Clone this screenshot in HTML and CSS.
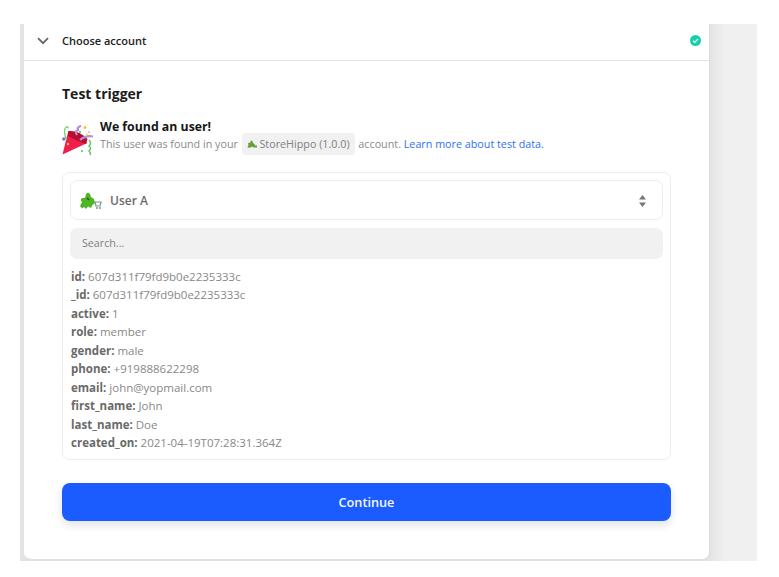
FILE: index.html
```html
<!DOCTYPE html>
<html lang="en">
<head>
    <meta charset="UTF-8">
    <title>Test trigger</title>
    <link rel="stylesheet" href="styles.css">
</head>
<body>
    <div class="frame">
        <div class="card">
            <div class="step-header">
                <svg class="chevron" width="12" height="8" viewBox="0 0 12 8"><path d="M1 1.2 L6 6.2 L11 1.2" fill="none" stroke="#666" stroke-width="1.8"/></svg>
                <span class="step-title">Choose account</span>
                <svg class="check" width="11" height="11" viewBox="0 0 11 11"><circle cx="5.5" cy="5.5" r="5.5" fill="#13d0ab"/><path d="M3 5.7 L4.8 7.4 L8 3.9" fill="none" stroke="#fff" stroke-width="1.2"/></svg>
            </div>

            <div class="step-body">
                <h2>Test trigger</h2>

                <div class="found">
                    <svg class="party" width="32" height="30" viewBox="0 0 32 30">
                        <path d="M0.5 29.5 L6.3 6 Q16 7 25.3 18 Z" fill="#ee1f4c"/>
                        <path d="M6.5 6 Q17 5 25.5 14 L24 19 Q13 15 6 11 Z" fill="#b80f30"/>
                        <path d="M4.5 15 Q1.5 7 3 3.5 Q5 0 6.5 3.5" fill="none" stroke="#7fcf7a" stroke-width="1.4"/>
                        <path d="M15 10 Q12.5 6 16 5 Q15 2 19 1" fill="none" stroke="#b28de0" stroke-width="2.2"/>
                        <path d="M18 15 Q24 10 31 11.5" fill="none" stroke="#b28de0" stroke-width="2.2"/>
                        <path d="M27 15 Q30 18 27 21 Q30 23 27 26 Q29 28 28 30" fill="none" stroke="#69c45f" stroke-width="1.5"/>
                        <circle cx="1.8" cy="14" r="1.7" fill="#9a62d8"/>
                        <circle cx="23" cy="2.5" r="1.4" fill="#f7c531"/>
                        <circle cx="27" cy="7" r="1" fill="#f7c531"/>
                        <circle cx="25" cy="10" r="1" fill="#f7c531"/>
                        <circle cx="18" cy="7" r="1" fill="#58b84f"/>
                        <circle cx="20" cy="26" r="1" fill="#58b84f"/>
                        <circle cx="6" cy="19" r="1.2" fill="#f7c531"/>
                    </svg>
                    <div class="found-text">
                        <div class="found-title">We found an user!</div>
                        <div class="found-note">
                            This user was found in your
                            <span class="app-chip">
                                <svg width="10" height="8" viewBox="0 0 10 8"><path d="M0.5 7.5 L1.5 4.5 L1 3 L3 2.8 L4 0.5 L5.5 1 L6 3 L7.5 4 L8 5.5 L10 5.5 L10 7.5 L6.5 7.5 L5 6.5 L3 7.8 Z" fill="#63a03a"/></svg>
                                StoreHippo (1.0.0)
                            </span>
                            account. <a href="#">Learn more about test data.</a>
                        </div>
                    </div>
                </div>

                <div class="sample-box">
                    <div class="sample-select">
                        <svg class="hippo" width="24" height="18" viewBox="0 0 24 18">
                            <path d="M1 14 L3 10 L1.5 8 L3 6 L6 6 L7 2 L9 0.5 L11 2 L12 5 L15 7 L16 11 L13.5 13 L12 16 L9 14.5 L7 17 L5 15 L3 16.5 Z" fill="#4fb524"/>
                            <path d="M8 6 L10 8" stroke="#1e4d12" stroke-width="1.2"/>
                            <path d="M16 10 L22 10 L21 14 L17 14 Z" fill="none" stroke="#7d9484" stroke-width="1.2"/>
                            <circle cx="18" cy="16" r="1" fill="#7d9484"/>
                            <circle cx="21" cy="16" r="1" fill="#7d9484"/>
                        </svg>
                        <span class="sample-name">User A</span>
                        <svg class="updown" width="7" height="12" viewBox="0 0 7 12"><path d="M3.5 0 L7 4.5 L0 4.5 Z M3.5 12 L0 7.5 L7 7.5 Z" fill="#777"/></svg>
                    </div>

                    <div class="search">Search...</div>

                    <ul class="fields">
                        <li><b>id:</b> 607d311f79fd9b0e2235333c</li>
                        <li><b>_id:</b> 607d311f79fd9b0e2235333c</li>
                        <li><b>active:</b> 1</li>
                        <li><b>role:</b> member</li>
                        <li><b>gender:</b> male</li>
                        <li><b>phone:</b> +919888622298</li>
                        <li><b>email:</b> john@yopmail.com</li>
                        <li><b>first_name:</b> John</li>
                        <li><b>last_name:</b> Doe</li>
                        <li><b>created_on:</b> 2021-04-19T07:28:31.364Z</li>
                    </ul>
                </div>

                <button class="continue-btn" type="button">Continue</button>
            </div>
        </div>
    </div>
</body>
</html>
```

FILE: styles.css
```css
* {
    margin: 0;
    padding: 0;
    box-sizing: border-box;
}

body {
    background: #ffffff;
    font-family: "Open Sans", "Noto Sans", sans-serif;
    color: #666666;
    padding: 24px 0 0 20px;
}

.frame {
    width: 737px;
    height: 537px;
    background: linear-gradient(90deg, #e3e3e3 689px, #f0f0f0 705px);
    padding-left: 4px;
}

.card {
    width: 686px;
    height: 537px;
    background: #ffffff;
    border-radius: 0 0 8px 8px;
    border-right: 1px solid #dcdcdc;
    border-bottom: 2px solid #dfdfdf;
}

.step-header {
    height: 37px;
    display: flex;
    align-items: center;
    padding: 0 8px 3px 13px;
    border-bottom: 1px solid #e2e2e2;
}

.chevron {
    margin-right: 13px;
}

.step-title {
    font-size: 11px;
    font-weight: 600;
    color: #222222;
    flex: 1;
}

.step-body {
    padding: 23px 38px 0;
}

h2 {
    font-size: 14px;
    line-height: 19px;
    font-weight: 700;
    color: #1c1c1c;
    margin-bottom: 18px;
}

.found {
    display: flex;
    align-items: flex-start;
    gap: 6px;
}

.party {
    margin-top: 4px;
}

.found-title {
    font-size: 12.3px;
    line-height: 12px;
    font-weight: 700;
    color: #161616;
}

.found-note {
    font-size: 10.75px;
    line-height: 22px;
    color: #8a8a8a;
    white-space: nowrap;
}

.found-note a {
    color: #2f6ff5;
    text-decoration: none;
}

.app-chip {
    display: inline-block;
    background: #f1f1f1;
    border-radius: 4px;
    padding: 0 5px;
    margin: 0 1px;
    color: #808080;
}

.sample-box {
    margin-top: 17px;
    height: 288px;
    border: 1px solid #ececec;
    border-radius: 7px;
    padding: 7px 7px 0;
}

.sample-select {
    height: 40px;
    display: flex;
    align-items: center;
    border: 1px solid #ececec;
    border-radius: 7px;
    padding: 1px 16px 0 8px;
}

.sample-name {
    flex: 1;
    margin-left: 7px;
    font-size: 12px;
    font-weight: 600;
    color: #6b6b6b;
}

.search {
    margin-top: 8px;
    height: 31px;
    line-height: 31px;
    background: #f1f1f1;
    border-radius: 7px;
    padding-left: 12px;
    font-size: 10.7px;
    color: #808080;
}

.fields {
    list-style: none;
    margin-top: 9px;
    padding-left: 1px;
}

.fields li {
    font-size: 11.5px;
    line-height: 18.44px;
    color: #888888;
    white-space: nowrap;
}

.fields b {
    font-weight: 700;
    color: #6a6a6a;
}

.continue-btn {
    display: block;
    width: 609px;
    height: 38px;
    margin-top: 23px;
    border: none;
    border-radius: 8px;
    background: #1a5cff;
    color: #f4f7ff;
    font-family: inherit;
    font-size: 12.7px;
    font-weight: 600;
    box-shadow: 0 4px 10px rgba(0, 0, 0, 0.12);
}
```
